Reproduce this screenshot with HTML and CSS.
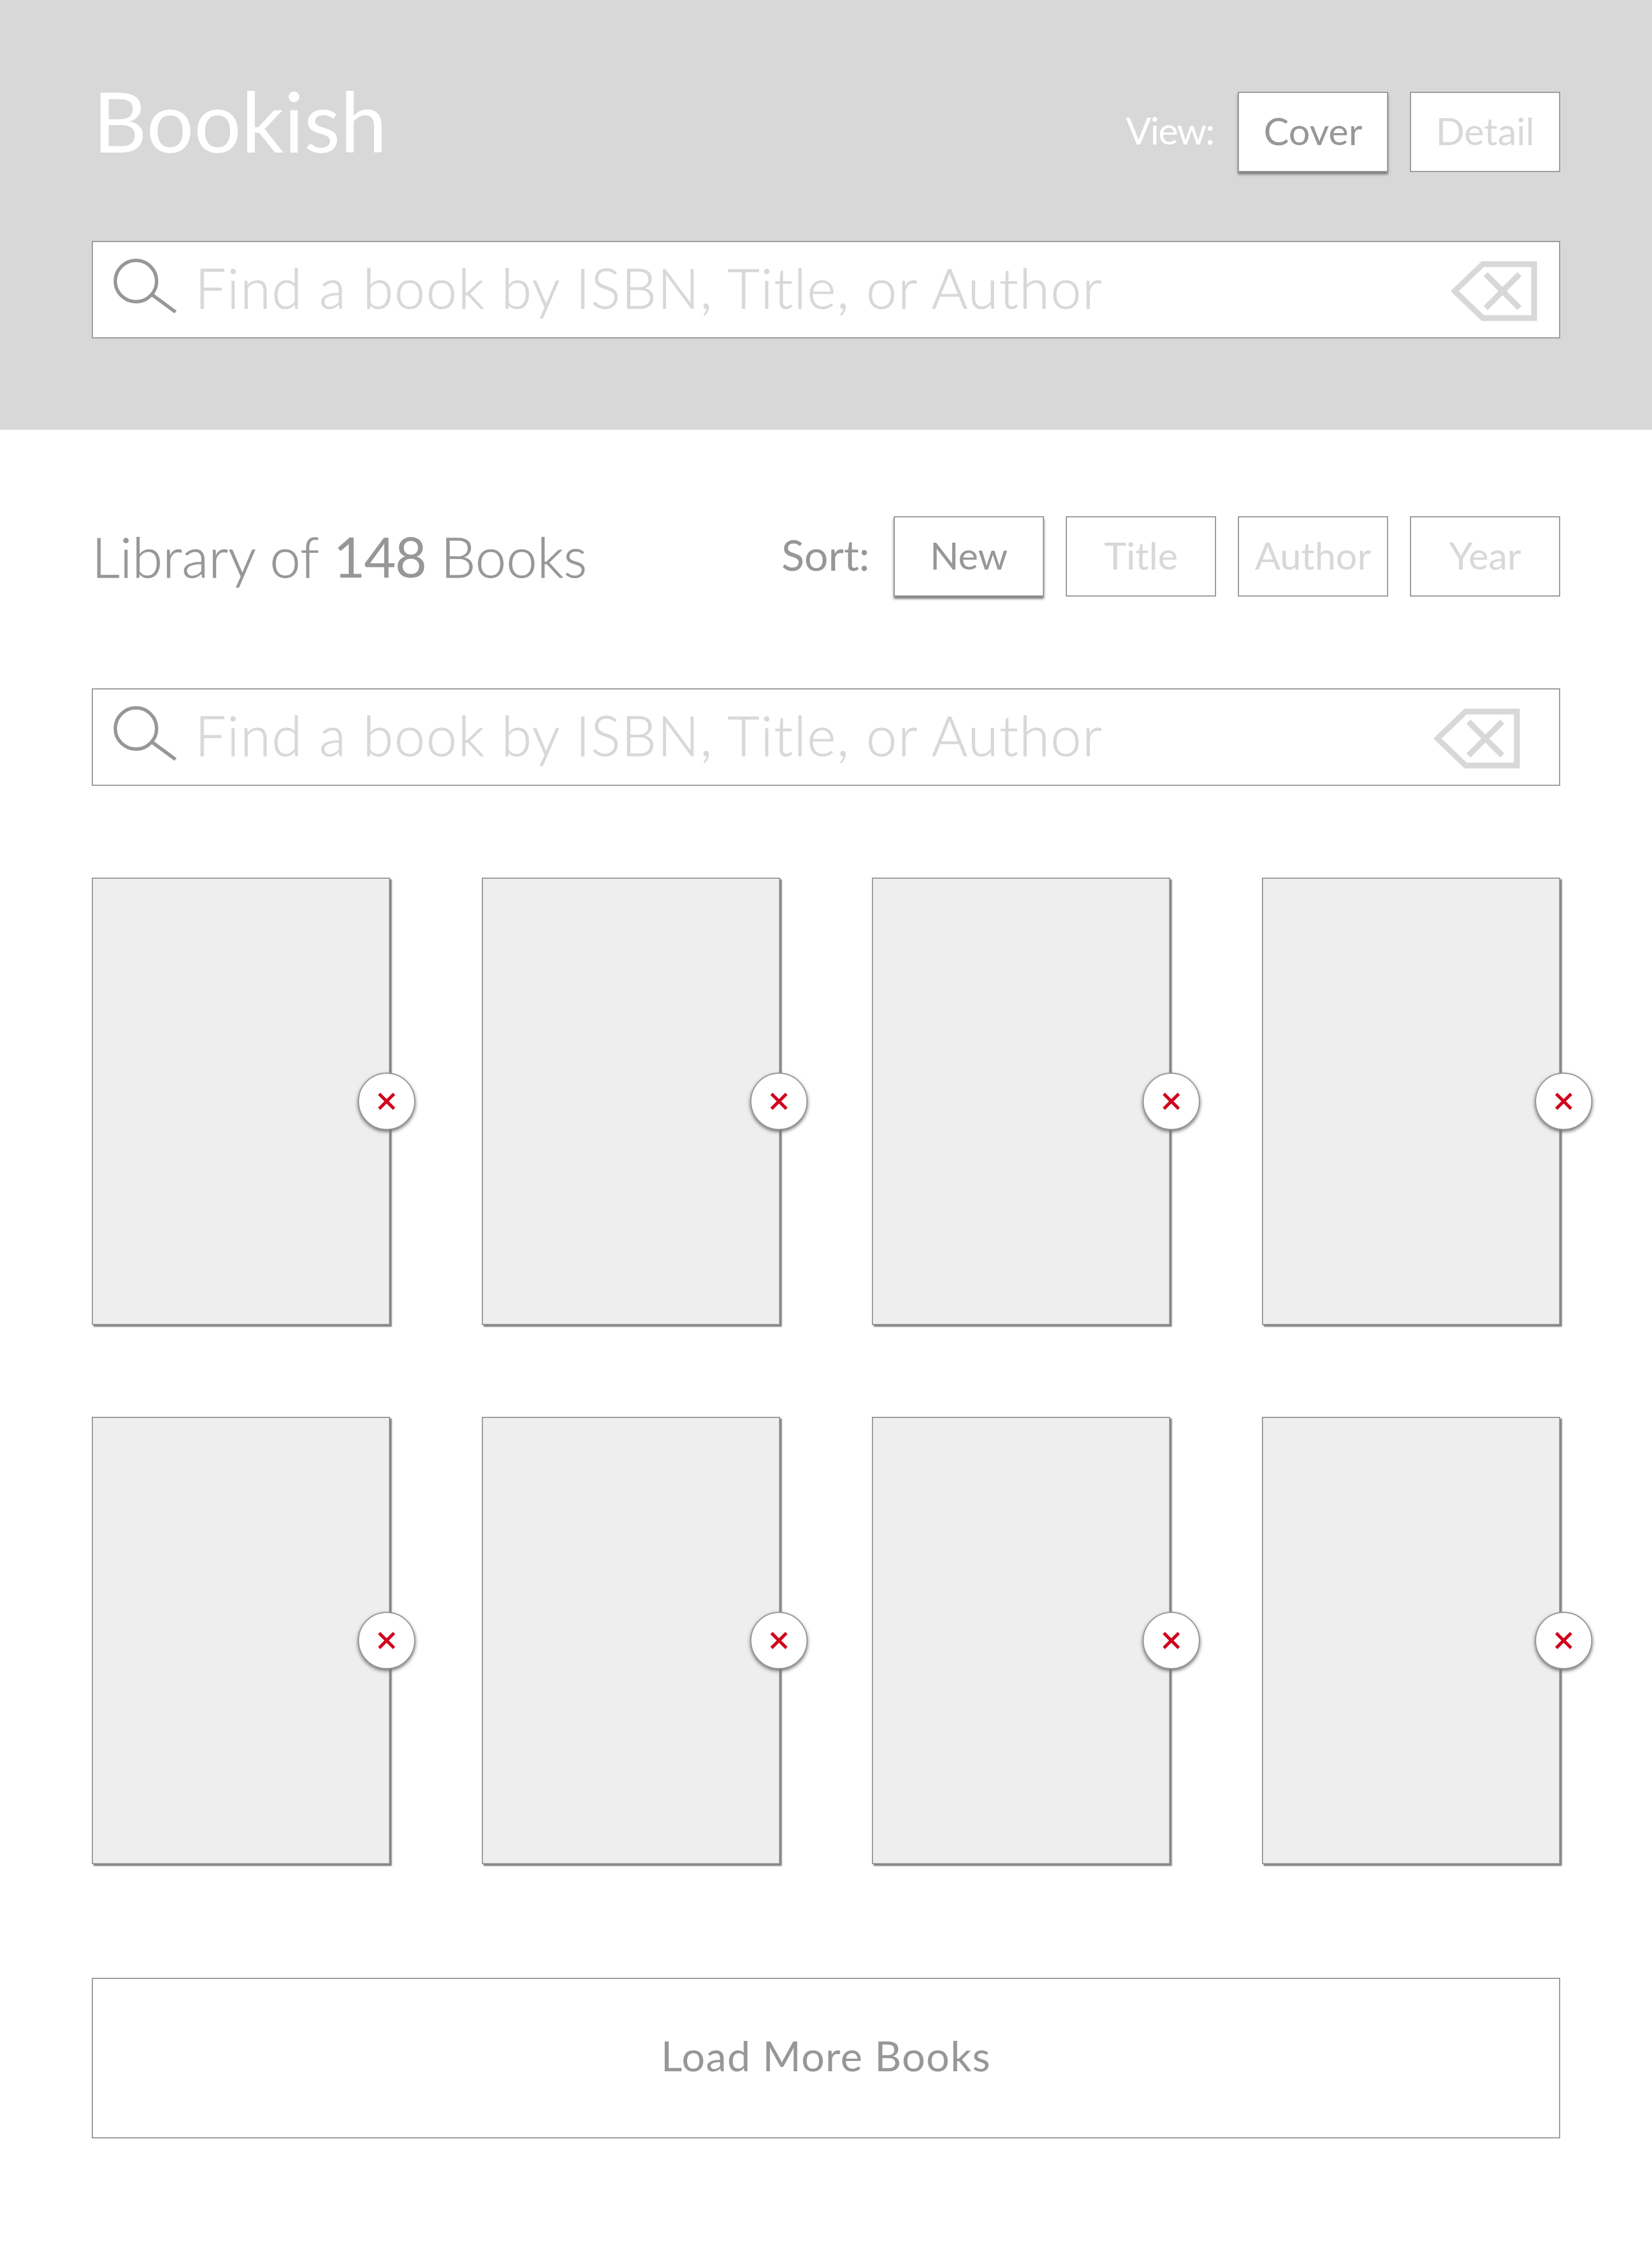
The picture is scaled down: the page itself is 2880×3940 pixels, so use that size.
FILE: index.html
```html
<!DOCTYPE html>
<html lang="en">
<head>
	<meta charset="UTF-8">
	<title>Bookish</title>
	<link rel="stylesheet" href="styles.css">
</head>
<body>
	<header class="top">
		<div class="top-row">
			<h1 class="logo">Bookish</h1>
			<div class="options">
				<span class="options-label view-label">View:</span>
				<button class="opt opt-on">Cover</button>
				<button class="opt">Detail</button>
			</div>
		</div>
		<div class="search">
			<svg class="search-icon" viewBox="0 0 110 95"><circle cx="39" cy="39" r="36"/><path d="M66 62 L108 93"/></svg>
			<span class="search-hint">Find a book by ISBN, Title, or Author</span>
			<svg class="clear-icon" viewBox="0 0 150 105"><path d="M55 5.500 H144.500 V99.500 H55 L6 52.500 Z"/><path d="M60 23 L119 82 M119 23 L60 82"/></svg>
		</div>
	</header>

	<main class="library">
		<div class="library-row">
			<h2 class="count">Library of <b>148</b> Books</h2>
			<div class="options">
				<span class="options-label sort-label">Sort:</span>
				<button class="opt opt-on">New</button>
				<button class="opt">Title</button>
				<button class="opt">Author</button>
				<button class="opt">Year</button>
			</div>
		</div>

		<div class="search search-inner">
			<svg class="search-icon" viewBox="0 0 110 95"><circle cx="39" cy="39" r="36"/><path d="M66 62 L108 93"/></svg>
			<span class="search-hint">Find a book by ISBN, Title, or Author</span>
			<svg class="clear-icon" viewBox="0 0 150 105"><path d="M55 5.500 H144.500 V99.500 H55 L6 52.500 Z"/><path d="M60 23 L119 82 M119 23 L60 82"/></svg>
		</div>

		<div class="books">
			<div class="book"><button class="remove" aria-label="Remove"><svg viewBox="0 0 30 30"><path d="M2 2 L28 28 M28 2 L2 28"/></svg></button></div>
			<div class="book"><button class="remove" aria-label="Remove"><svg viewBox="0 0 30 30"><path d="M2 2 L28 28 M28 2 L2 28"/></svg></button></div>
			<div class="book"><button class="remove" aria-label="Remove"><svg viewBox="0 0 30 30"><path d="M2 2 L28 28 M28 2 L2 28"/></svg></button></div>
			<div class="book"><button class="remove" aria-label="Remove"><svg viewBox="0 0 30 30"><path d="M2 2 L28 28 M28 2 L2 28"/></svg></button></div>
			<div class="book"><button class="remove" aria-label="Remove"><svg viewBox="0 0 30 30"><path d="M2 2 L28 28 M28 2 L2 28"/></svg></button></div>
			<div class="book"><button class="remove" aria-label="Remove"><svg viewBox="0 0 30 30"><path d="M2 2 L28 28 M28 2 L2 28"/></svg></button></div>
			<div class="book"><button class="remove" aria-label="Remove"><svg viewBox="0 0 30 30"><path d="M2 2 L28 28 M28 2 L2 28"/></svg></button></div>
			<div class="book"><button class="remove" aria-label="Remove"><svg viewBox="0 0 30 30"><path d="M2 2 L28 28 M28 2 L2 28"/></svg></button></div>
		</div>

		<button class="more">Load More Books</button>
	</main>
</body>
</html>
```

FILE: styles.css
```css
* {
	box-sizing: border-box;
}

body {
	margin: 0;
	background: #fff;
	color: #979797;
	font-family: Lato, "Noto Sans", sans-serif;
}

button {
	font-family: inherit;
	cursor: pointer;
}

/* header */
.top {
	height: 749px;
	padding: 160px 160px 0;
	background: #d8d8d8;
}

.top-row {
	display: flex;
	justify-content: space-between;
	height: 140px;
	margin-bottom: 120px;
}

.logo {
	margin: -35px 0 0 2px;
	color: #fff;
	font-size: 146px;
	font-weight: 400;
	line-height: 170px;
}

.options {
	display: flex;
	align-items: flex-start;
	gap: 38px;
}

.options-label {
	margin-right: 4px;
	font-size: 66px;
	line-height: 134px;
}

.view-label {
	color: #fff;
	letter-spacing: -2px;
}

.sort-label {
	font-size: 74px;
}

.opt {
	width: 262px;
	height: 140px;
	padding: 0 0 6px;
	border: 2px solid #979797;
	background: #fff;
	color: #d8d8d8;
	font-size: 66px;
}

.opt-on {
	color: #979797;
	box-shadow: 0 4px 4px #7a7a7a;
}

/* search box */
.search {
	display: flex;
	align-items: center;
	width: 2560px;
	height: 170px;
	padding: 0 38px 0 36px;
	border: 2px solid #979797;
	background: #fff;
}

.search-icon {
	flex: none;
	width: 110px;
	height: 95px;
	margin: 0 32px 14px 0;
	fill: none;
	stroke: #979797;
	stroke-width: 6;
}

.search-hint {
	flex: 1;
	margin-bottom: 10px;
	color: #d8d8d8;
	font-size: 96px;
	font-weight: 300;
	letter-spacing: 1.900px;
	-webkit-text-stroke: 1px;
}

.clear-icon {
	flex: none;
	width: 150px;
	height: 105px;
	margin-top: 5px;
	fill: none;
	stroke: #d8d8d8;
	stroke-width: 10;
}

.search-inner {
	margin-bottom: 160px;
	padding-right: 68px;
}

/* library */
.library {
	padding: 151px 160px 212px;
}

.library-row {
	display: flex;
	justify-content: space-between;
	height: 140px;
	margin-bottom: 160px;
}

.count {
	margin: 0;
	font-size: 96px;
	font-weight: 300;
	letter-spacing: 0.300px;
	line-height: 140px;
	-webkit-text-stroke: 1px;
}

.count b {
	font-weight: 400;
	letter-spacing: -2px;
	-webkit-text-stroke: 0;
}

.books {
	display: grid;
	grid-template-columns: repeat(4, 520px);
	grid-auto-rows: 780px;
	gap: 160px;
	margin-bottom: 198px;
}

.book {
	position: relative;
	border: 2px solid #979797;
	background: #eee;
	box-shadow: 3px 3px 2px #7f7f7f;
}

.remove {
	position: absolute;
	top: 338px;
	right: -46px;
	display: flex;
	align-items: center;
	justify-content: center;
	width: 100px;
	height: 100px;
	padding: 0;
	border: 2px solid #979797;
	border-radius: 50%;
	background: #fff;
	box-shadow: 0 3px 6px #707070;
}

.remove svg {
	width: 30px;
	height: 30px;
	fill: none;
	stroke: #d0021b;
	stroke-width: 5.500;
}

.book:nth-child(4n+2) .remove {
	right: -50px;
}

.book:nth-child(4n+3) .remove {
	right: -54px;
}

.book:nth-child(4n) .remove {
	right: -58px;
}

.more {
	display: block;
	width: 2560px;
	height: 280px;
	padding: 0 0 10px;
	border: 2px solid #979797;
	background: #fff;
	color: #979797;
	font-size: 72px;
	letter-spacing: 1.500px;
}
```
